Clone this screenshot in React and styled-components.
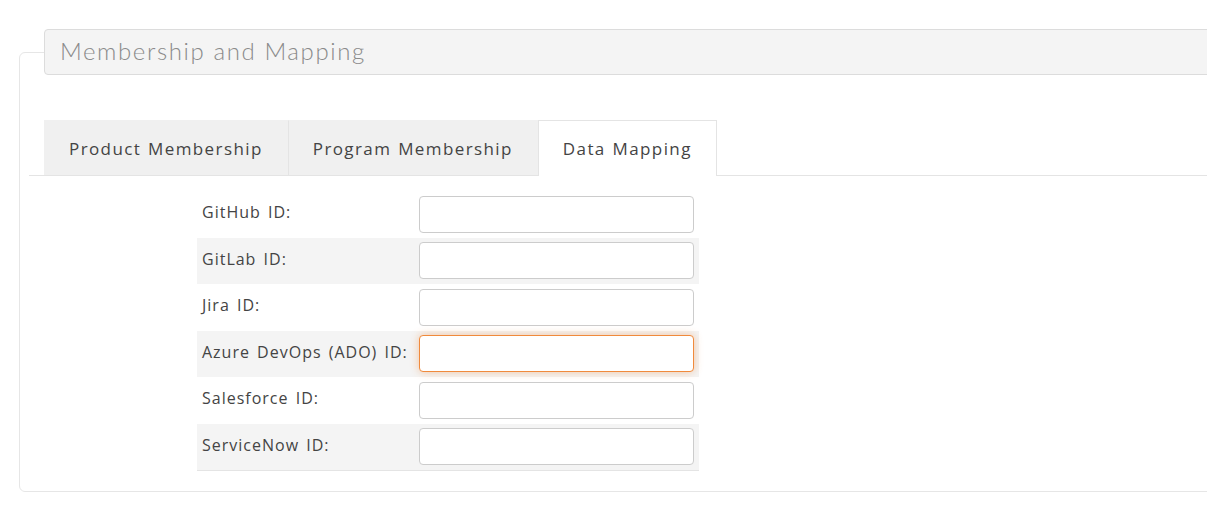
import React from "react";
import styled, { createGlobalStyle } from "styled-components";

const GlobalStyle = createGlobalStyle`
  body {
    margin: 0;
    background: #ffffff;
    font-family: "Open Sans", "Liberation Sans", sans-serif;
    color: #444;
    overflow: hidden;
  }
`;

const Page = styled.div`
  padding-top: 52px;
  padding-left: 19px;
`;

const Panel = styled.div`
  width: calc(100% + 40px);
  border: 1px solid #e6e6e6;
  border-radius: 6px;
  padding-bottom: 20px;
  box-sizing: border-box;
`;

const Legend = styled.div`
  margin: -24px 0 0 24px;
  height: 46px;
  box-sizing: border-box;
  display: flex;
  align-items: center;
  padding: 0 0 4px 15px;
  background: #f4f4f4;
  border: 1px solid #dcdcdc;
  border-radius: 4px;
  font-family: "Lato", sans-serif;
  font-weight: 300;
  font-size: 24px;
  letter-spacing: 1.6px;
  color: #8a8a8a;
`;

const TabBar = styled.div`
  display: flex;
  margin: 45px 0 0 9px;
  padding-left: 15px;
  border-bottom: 1px solid #e4e4e4;
`;

const Tab = styled.div`
  box-sizing: border-box;
  display: flex;
  align-items: center;
  padding: 0 24px;
  font-size: 17px;
  letter-spacing: 1.4px;
  word-spacing: 1px;
  color: #444;
  background: ${(p) => (p.$active ? "#ffffff" : "#f0f0f0")};
  border: 1px solid ${(p) => (p.$active ? "#e4e4e4" : "transparent")};
  border-left-color: ${(p) => (p.$first ? "transparent" : "#e4e4e4")};
  border-bottom: none;
  margin-bottom: ${(p) => (p.$active ? "-1px" : "0")};
  height: ${(p) => (p.$active ? "56px" : "55px")};
`;

const Form = styled.div`
  width: 502px;
  margin: 15px 0 0 177px;
  border-bottom: 1px solid #e4e4e4;
`;

const Row = styled.div`
  display: grid;
  grid-template-columns: 222px 275px;
  align-items: center;
  height: 46.5px;
  background: ${(p) => (p.$shade ? "#f4f4f4" : "transparent")};
`;

const Label = styled.label`
  padding-left: 5px;
  font-size: 16px;
  letter-spacing: 1px;
  word-spacing: 2px;
  color: #444;
  white-space: nowrap;
  margin-top: -4px;
`;

const Input = styled.input`
  height: 37px;
  width: 275px;
  box-sizing: border-box;
  border: 1px solid ${(p) => (p.$focus ? "#f08a3c" : "#cccccc")};
  border-radius: 4px;
  background: #fff;
  outline: none;
  box-shadow: ${(p) =>
    p.$focus ? "0 0 8px rgba(240, 138, 60, 0.45)" : "none"};
`;

const fields = [
  "GitHub ID",
  "GitLab ID",
  "Jira ID",
  "Azure DevOps (ADO) ID",
  "Salesforce ID",
  "ServiceNow ID",
];

export default function App() {
  return (
    <Page>
      <GlobalStyle />
      <Panel>
        <Legend>Membership and Mapping</Legend>
        <TabBar>
          <Tab $first>Product Membership</Tab>
          <Tab>Program Membership</Tab>
          <Tab $active>Data Mapping</Tab>
        </TabBar>
        <Form>
          {fields.map((f, i) => (
            <Row key={f} $shade={i % 2 === 1}>
              <Label>{f}:</Label>
              <Input type="text" $focus={i === 3} />
            </Row>
          ))}
        </Form>
      </Panel>
    </Page>
  );
}
